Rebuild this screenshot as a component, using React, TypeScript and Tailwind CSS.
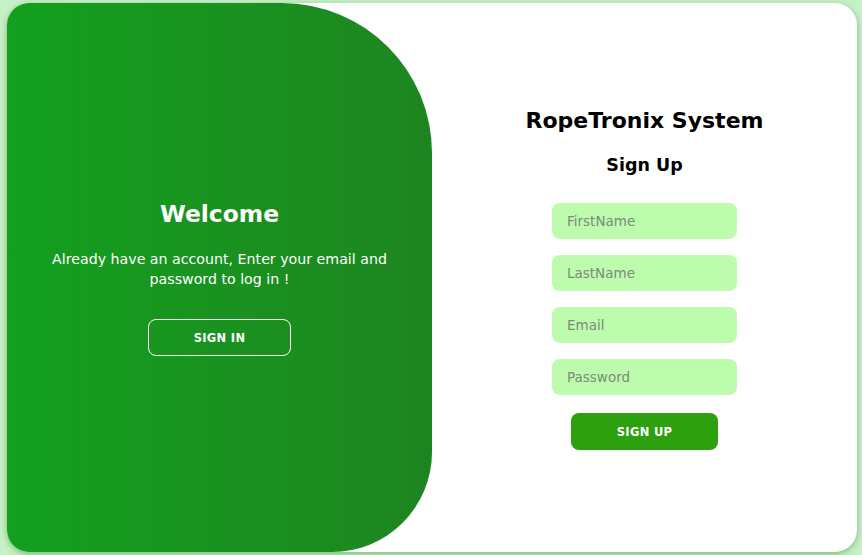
import React from "react";

export default function App() {
  const font = { fontFamily: '"DejaVu Sans", "Noto Sans", sans-serif' };
  return (
    <div className="w-[862px] h-[555px] bg-[#c6f1c6] flex pt-[3px] pb-[3px] pl-[7px] pr-[5px]" style={font}>
      <div className="flex-1 flex bg-white rounded-[22px] overflow-hidden shadow-[0_2px_6px_rgba(0,80,0,0.35)]">
        <div className="w-[425px] h-full flex flex-col items-center justify-center text-white bg-gradient-to-r from-[#12a01e] to-[#1d8520] rounded-tr-[150px] rounded-br-[100px]">
          <h1 className="text-[23.4px] font-bold leading-[30px]">Welcome</h1>
          <p className="mt-[20px] text-[14.2px] leading-[20px] text-center w-[360px]">
            Already have an account, Enter your email and password to log in !
          </p>
          <button className="mt-[30px] w-[143px] h-[37px] pt-[2px] border border-white rounded-[8px] text-[11.5px] font-bold tracking-[0.3px]">
            SIGN IN
          </button>
        </div>
        <div className="flex-1 flex flex-col items-center justify-center">
          <h2 className="text-[22px] font-bold text-black leading-[30px]">RopeTronix System</h2>
          <h3 className="mt-[17px] text-[17.5px] font-bold text-black leading-[24px]">Sign Up</h3>
          <div className="mt-[26px] flex flex-col gap-[16px]">
            {["FirstName", "LastName", "Email", "Password"].map((p) => (
              <input
                key={p}
                placeholder={p}
                type={p === "Password" ? "password" : "text"}
                className="w-[185px] h-[36px] rounded-[8px] bg-[#bdfcad] pl-[15px] text-[13.5px] outline-none placeholder:text-[#7c8a7a]"
                style={font}
              />
            ))}
          </div>
          <button className="mt-[18px] w-[147px] h-[37px] pt-[3px] rounded-[8px] bg-[#2ca00f] text-white text-[11.5px] font-bold tracking-[0.3px]">
            SIGN UP
          </button>
        </div>
      </div>
    </div>
  );
}
